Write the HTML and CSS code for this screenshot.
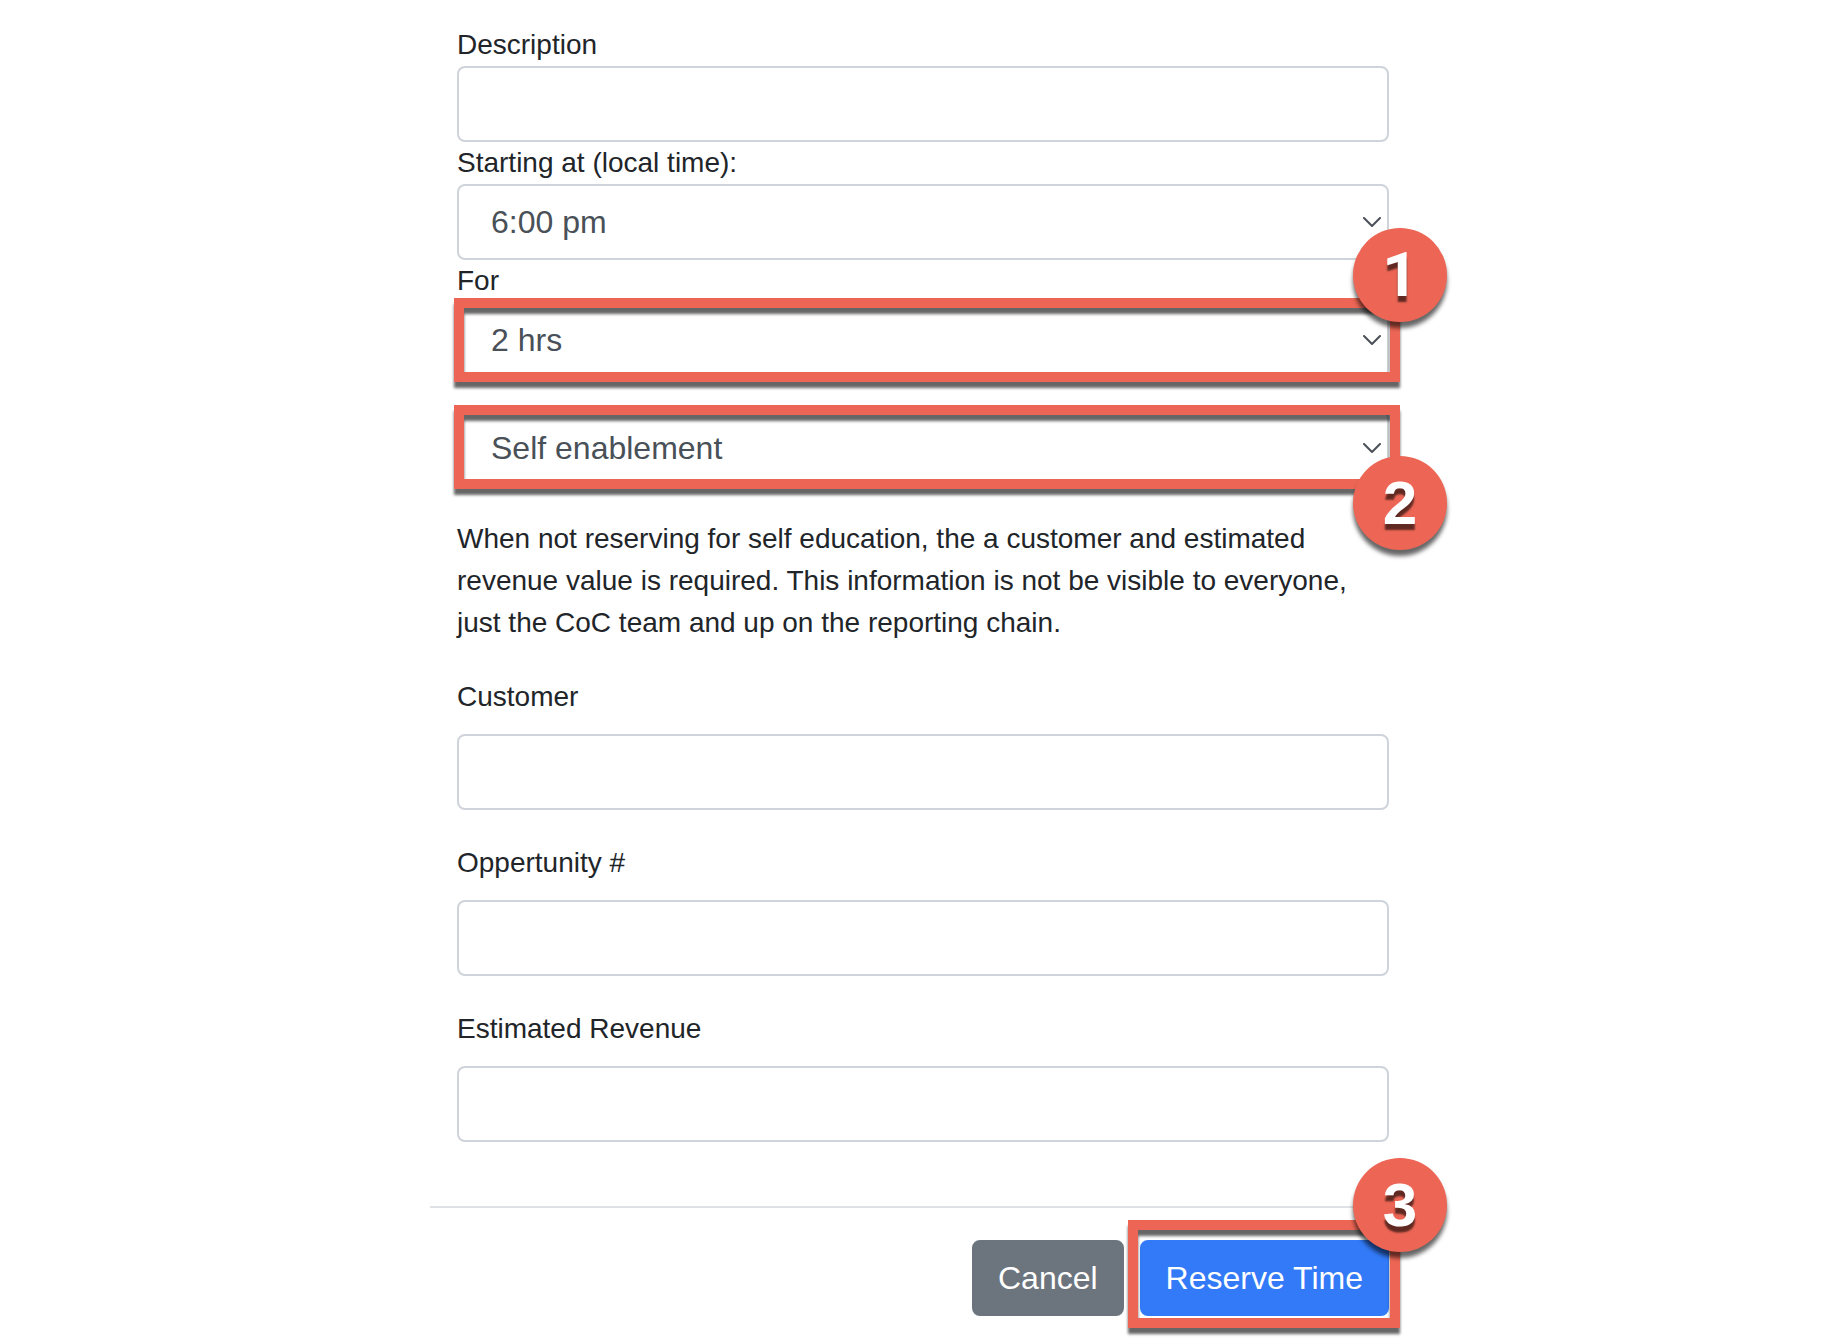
FILE: index.html
```html
<!DOCTYPE html>
<html lang="en">
<head>
<meta charset="utf-8">
<title>Reserve Time</title>
<link rel="stylesheet" href="styles.css">
</head>
<body>
<form class="modal">
  <div class="modal-body">
    <label class="label" for="description">Description</label>
    <input class="control" id="description" type="text">
    <label class="label" for="start">Starting at (local time):</label>
    <div class="select-wrap">
      <select class="control select" id="start"><option>6:00 pm</option></select>
      <svg class="chevron" viewBox="0 0 18 11"><path d="M1 1l8 8 8-8"/></svg>
    </div>
    <label class="label" for="duration">For</label>
    <div class="select-wrap">
      <select class="control select" id="duration"><option>2 hrs</option></select>
      <svg class="chevron" viewBox="0 0 18 11"><path d="M1 1l8 8 8-8"/></svg>
      <div class="highlight highlight-duration"></div>
      <div class="badge badge-duration">1</div>
    </div>
    <div class="select-wrap purpose">
      <select class="control select" id="purpose"><option>Self enablement</option></select>
      <svg class="chevron" viewBox="0 0 18 11"><path d="M1 1l8 8 8-8"/></svg>
      <div class="highlight highlight-purpose"></div>
      <div class="badge badge-purpose">2</div>
    </div>
    <p class="note">When not reserving for self education, the a customer and estimated<br>revenue value is required. This information is not be visible to everyone,<br>just the CoC team and up on the reporting chain.</p>
    <div class="group">
      <label class="label" for="customer">Customer</label>
      <input class="control" id="customer" type="text">
    </div>
    <div class="group">
      <label class="label" for="opportunity">Oppertunity #</label>
      <input class="control" id="opportunity" type="text">
    </div>
    <div class="group">
      <label class="label" for="revenue">Estimated Revenue</label>
      <input class="control" id="revenue" type="text">
    </div>
  </div>
  <div class="modal-footer">
    <button class="btn btn-secondary" type="button">Cancel</button>
    <div class="submit-wrap">
      <button class="btn btn-primary" type="button">Reserve Time</button>
      <div class="highlight highlight-submit"></div>
      <div class="badge badge-submit">3</div>
    </div>
  </div>
</form>
</body>
</html>
```

FILE: styles.css
```css
* { box-sizing: border-box; }

body {
  margin: 0;
  background: #fff;
  color: #212529;
  font: 28px/42px "Liberation Sans", Arial, sans-serif;
}

.modal {
  width: 986px;
  margin: 0 auto;
}

.modal-body { padding: 24px 27px 64px; }

.label { display: block; }

.control {
  display: block;
  width: 100%;
  height: 76px;
  margin: 0;
  padding: 0 24px;
  border: 2px solid #ced4da;
  border-radius: 8px;
  background: #fff;
  color: #495057;
  font: 32px/48px "Liberation Sans", Arial, sans-serif;
}

.select {
  appearance: none;
  padding-left: 32px;
}

.select-wrap,
.submit-wrap { position: relative; }

.purpose { margin-top: 32px; }

.chevron {
  position: absolute;
  top: 33px;
  right: 8px;
  width: 18px;
  height: 11px;
  fill: none;
  stroke: #495057;
  stroke-width: 2;
  stroke-linecap: round;
  stroke-linejoin: round;
}

.note { margin: 32px 0; }

.group { margin-bottom: 32px; }
.group:last-child { margin-bottom: 0; }
.group .label { margin-bottom: 16px; }

.modal-footer {
  display: flex;
  justify-content: flex-end;
  gap: 16px;
  padding: 32px 27px 26px;
  border-top: 2px solid #dee2e6;
}

.btn {
  display: block;
  height: 76px;
  margin: 0;
  padding: 0 24px;
  border: 2px solid;
  border-radius: 8px;
  color: #fff;
  font: 32px/48px "Liberation Sans", Arial, sans-serif;
}

.btn-secondary { background: #6c757d; border-color: #6c757d; }
.btn-primary { background: #327af7; border-color: #327af7; }

/* Numbered step callouts over the controls */
.highlight {
  position: absolute;
  border: 10px solid #ed6655;
  filter: drop-shadow(0 6px 1.5px rgba(0, 0, 0, .6));
  pointer-events: none;
}

.highlight-duration { inset: -4px -11px -4px -3px; }
.highlight-purpose { inset: -5px -11px -3px -3px; }
.highlight-submit { inset: -20px -11px -12px -12px; }

.badge {
  position: absolute;
  right: -58px;
  z-index: 1;
  width: 94px;
  height: 94px;
  border-radius: 50%;
  background: #ed6655;
  box-shadow: 0 6px 4px rgba(0, 0, 0, .6);
  color: #fff;
  font-size: 62px;
  font-weight: bold;
  line-height: 93px;
  text-align: center;
  text-shadow: 0 6px 2px rgba(0, 0, 0, .6);
}

/* Roboto's numeral one has no foot serif */
.badge-duration { top: -74px; font-family: Roboto, "Liberation Sans", sans-serif; }
.badge-purpose { top: 46px; }
.badge-submit { top: -82px; }
```
